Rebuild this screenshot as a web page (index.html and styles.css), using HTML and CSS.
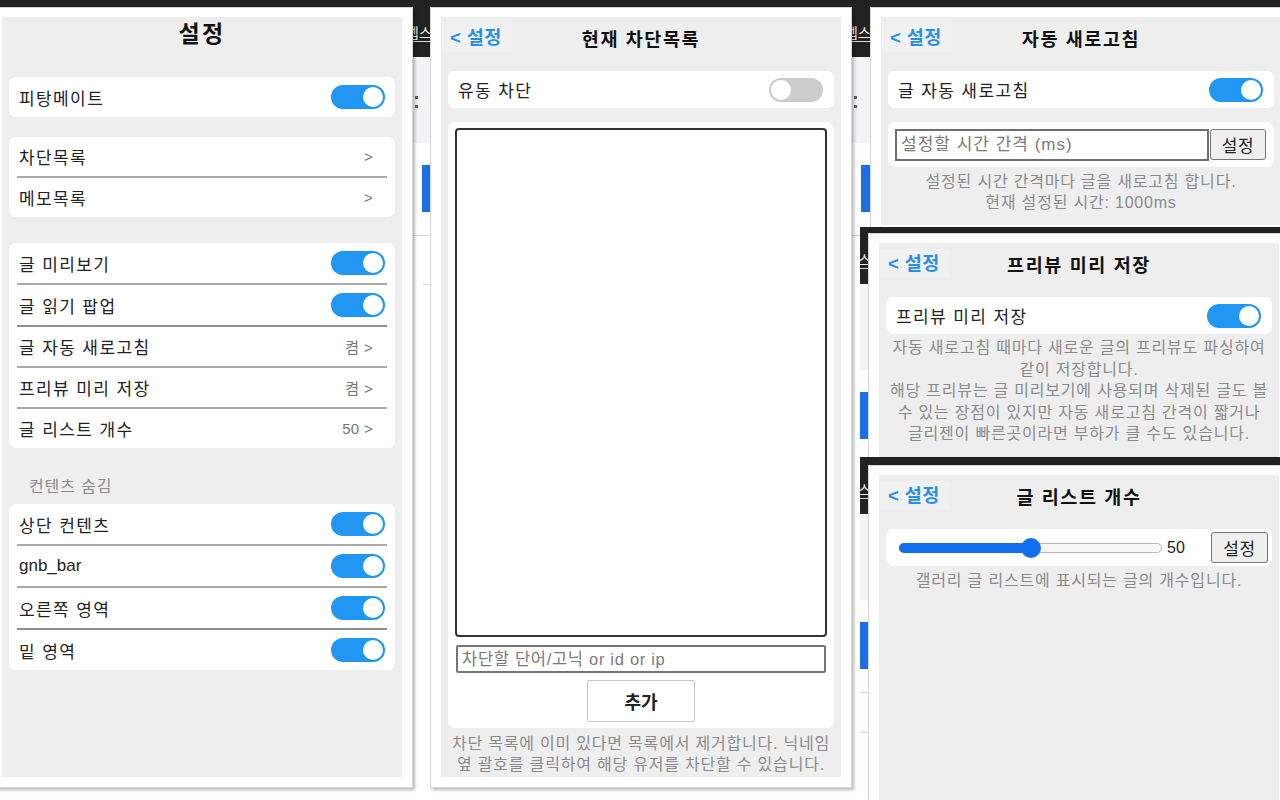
FILE: index.html
```html
<!DOCTYPE html>
<html lang="ko">
<head>
<meta charset="utf-8">
<title>설정</title>
<link rel="stylesheet" href="styles.css">
</head>
<body>
<div class="canvas">

  <!-- shot 1 : main settings -->
  <div class="shot shot1">
    <div class="frame">
      <div class="app app-tall">
        <h1 class="main-title">설정</h1>
        <div class="card">
          <div class="row"><span>피탕메이트</span><span class="tg on"></span></div>
        </div>
        <div class="card card-gap">
          <div class="row link"><span>차단목록</span><span class="val">&gt;</span></div>
          <div class="sep"></div>
          <div class="row link"><span>메모목록</span><span class="val">&gt;</span></div>
        </div>
        <div class="card">
          <div class="row"><span>글 미리보기</span><span class="tg on"></span></div>
          <div class="sep"></div>
          <div class="row"><span>글 읽기 팝업</span><span class="tg on"></span></div>
          <div class="sep sep-dark"></div>
          <div class="row link"><span>글 자동 새로고침</span><span class="val">켬 &gt;</span></div>
          <div class="sep"></div>
          <div class="row link"><span>프리뷰 미리 저장</span><span class="val">켬 &gt;</span></div>
          <div class="sep"></div>
          <div class="row link"><span>글 리스트 개수</span><span class="val">50 &gt;</span></div>
        </div>
        <div class="group-label">컨텐츠 숨김</div>
        <div class="card">
          <div class="row"><span>상단 컨텐츠</span><span class="tg on"></span></div>
          <div class="sep"></div>
          <div class="row"><span class="latin">gnb_bar</span><span class="tg on"></span></div>
          <div class="sep"></div>
          <div class="row"><span>오른쪽 영역</span><span class="tg on"></span></div>
          <div class="sep sep-dark"></div>
          <div class="row"><span>밑 영역</span><span class="tg on"></span></div>
        </div>
      </div>
    </div>
    <div class="sliver sliver-right">
      <div class="s-head"><span class="s-text">렙스</span></div>
      <div class="s-band"><div class="dot"></div><div class="dot"></div></div>
      <div class="s-body"><div class="s-btn"></div><div class="s-line"></div><div class="s-line2"></div></div>
    </div>
  </div>

  <!-- shot 2 : block list -->
  <div class="shot shot2">
    <div class="frame">
      <div class="app app-tall">
        <div class="head"><span class="back">&lt; 설정</span><span class="head-title">현재 차단목록</span><span></span></div>
        <div class="card sub-card">
          <div class="row row-sub"><span>유동 차단</span><span class="tg"></span></div>
        </div>
        <div class="card block-card">
          <textarea class="block-list"></textarea>
          <input class="block-input" type="text" placeholder="차단할 단어/고닉 or id or ip">
          <button class="add-btn" type="button">추가</button>
        </div>
        <p class="desc desc-block">차단 목록에 이미 있다면 목록에서 제거합니다. 닉네임<br>옆 괄호를 클릭하여 해당 유저를 차단할 수 있습니다.</p>
      </div>
    </div>
    <div class="sliver sliver-right">
      <div class="s-head"><span class="s-text">렙스</span></div>
      <div class="s-band"><div class="dot"></div><div class="dot"></div></div>
      <div class="s-body"><div class="s-btn"></div><div class="s-line"></div><div class="s-line2"></div></div>
    </div>
  </div>

  <!-- shot 3 : auto refresh -->
  <div class="shot shot3">
    <div class="frame">
      <div class="app app-r3">
        <div class="head"><span class="back">&lt; 설정</span><span class="head-title">자동 새로고침</span><span></span></div>
        <div class="card sub-card">
          <div class="row row-sub"><span>글 자동 새로고침</span><span class="tg on"></span></div>
        </div>
        <div class="card input-card">
          <input class="ms-input" type="text" placeholder="설정할 시간 간격 (ms)">
          <button class="set-btn" type="button">설정</button>
        </div>
        <p class="desc">설정된 시간 간격마다 글을 새로고침 합니다.<br>현재 설정된 시간: 1000ms</p>
      </div>
    </div>
  </div>

  <!-- shot 4 : preview save -->
  <div class="shot shot4">
    <div class="sliver sliver-left">
      <div class="s-head"><span class="s-text s-text-left">스</span></div>
      <div class="s-band"></div>
      <div class="s-body"><div class="s-btn"></div><div class="s-line"></div></div>
    </div>
    <div class="frame">
      <div class="app app-r4">
        <div class="head"><span class="back">&lt; 설정</span><span class="head-title">프리뷰 미리 저장</span><span></span></div>
        <div class="card sub-card">
          <div class="row row-sub"><span>프리뷰 미리 저장</span><span class="tg on"></span></div>
        </div>
        <p class="desc desc-long">자동 새로고침 때마다 새로운 글의 프리뷰도 파싱하여<br>같이 저장합니다.<br>해당 프리뷰는 글 미리보기에 사용되며 삭제된 글도 볼<br>수 있는 장점이 있지만 자동 새로고침 간격이 짧거나<br>글리젠이 빠른곳이라면 부하가 클 수도 있습니다.</p>
      </div>
    </div>
  </div>

  <!-- shot 5 : list count -->
  <div class="shot shot5">
    <div class="sliver sliver-left">
      <div class="s-head"><span class="s-text s-text-left">스</span></div>
      <div class="s-band"></div>
      <div class="s-body"><div class="s-btn"></div><div class="s-line"></div><div class="s-line3"></div></div>
    </div>
    <div class="frame">
      <div class="app app-r5">
        <div class="head"><span class="back">&lt; 설정</span><span class="head-title">글 리스트 개수</span><span></span></div>
        <div class="card slider-card">
          <div class="range"><div class="range-fill" style="width:50%"></div><span class="range-knob" style="left:50%"></span></div>
          <span class="range-val">50</span>
          <button class="set-btn set-btn-slim" type="button">설정</button>
        </div>
        <p class="desc">갤러리 글 리스트에 표시되는 글의 개수입니다.</p>
      </div>
    </div>
  </div>

</div>
</body>
</html>
```

FILE: styles.css
```css
* { box-sizing: border-box; }

html, body {
  margin: 0;
  padding: 0;
}

body {
  width: 1280px;
  height: 800px;
  overflow: hidden;
  background: #ffffff;
  font-family: "Liberation Sans", "Noto Sans CJK KR", sans-serif;
  color: #222222;
}

.canvas {
  position: relative;
  width: 1280px;
  height: 800px;
  overflow: hidden;
  background: #ffffff;
}

/* ---------- screenshots placed on the collage ---------- */
.shot {
  position: absolute;
  display: flex;
  align-items: flex-start;
  overflow: hidden;
  background: linear-gradient(#222222 0, #222222 8px, #ffffff 8px);
}

.shot1 { left: 0; top: 0; width: 430px; height: 800px; }
.shot2 { left: 430px; top: 0; width: 440px; height: 800px; }
.shot3 { left: 870px; top: 0; width: 410px; height: 227px; }
.shot4 { left: 860px; top: 227px; width: 420px; height: 230px; }
.shot5 { left: 860px; top: 457px; width: 420px; height: 343px; }

.frame {
  position: relative;
  z-index: 1;
  flex: none;
  margin-top: 7px;
  padding: 9px 10px 10px;
  background: #ffffff;
  border: 1px solid #d6d6d6;
  box-shadow: 2px 2px 3px rgba(0, 0, 0, 0.28);
}

.shot1 .frame { margin-left: -9px; }
.shot4 .frame { margin-top: 6px; }
.shot5 .frame { margin-top: 8px; }

/* background page slivers */
.sliver {
  align-self: stretch;
  display: flex;
  flex-direction: column;
  overflow: hidden;
}

.sliver-right { flex: 1; }
.sliver-left { flex: none; width: 8px; }

.s-head {
  flex: none;
  height: 57px;
  background: #222222;
  padding-top: 25px;
  white-space: nowrap;
}

.s-text {
  display: block;
  width: 40px;
  margin-left: -7px;
  color: #f4f0e0;
  font-size: 14px;
  line-height: 16px;
  border-bottom: 1px solid #d8d8d8;
}

.s-text-left { margin-left: -2px; }

.s-band {
  flex: none;
  height: 86px;
  background: #f3f4f6;
  padding: 39px 0 0 2px;
}

.dot {
  width: 3px;
  height: 3px;
  margin-bottom: 6px;
  background: #5a6070;
}

.s-body {
  flex: 1;
  background: #ffffff;
  padding-top: 22px;
}

.s-btn {
  height: 47px;
  margin-left: 9px;
  background: #1a6fe6;
}

.sliver-left .s-btn { margin-left: 0; }

.s-line {
  height: 1px;
  margin-top: 23px;
  background: #d4d4d4;
}

.s-line2 {
  height: 1px;
  margin: 48px 0 0 9px;
  background: #d8d8d8;
}

.s-line3 {
  height: 1px;
  margin-top: 39px;
  background: #dddddd;
}

/* ---------- popup app ---------- */
.app {
  width: 400px;
  background: #eeeeee;
  padding: 0 7px;
  overflow: hidden;
}

.app-tall { height: 760px; }
.app-r3 { height: 208px; }
.app-r4 { height: 240px; }
.app-r5 { height: 360px; }

.main-title {
  margin: 0 0 26px;
  text-align: center;
  font-size: 23px;
  line-height: 34px;
  font-weight: 700;
  letter-spacing: 2.4px;
  color: #111111;
}

.card {
  background: #ffffff;
  border-radius: 7px;
  margin-bottom: 20px;
}

.card-gap { margin-bottom: 26px; }
.sub-card { margin-bottom: 0; }

.row {
  display: flex;
  align-items: center;
  justify-content: space-between;
  height: 40px;
  padding: 0 10px;
  font-size: 17px;
  letter-spacing: 1.4px;
  color: #222222;
}

.row .latin { letter-spacing: 0; }

.row.link { height: 39px; }

.row-sub {
  height: 37px;
  padding: 0 11px 0 10px;
}

.val {
  font-size: 15px;
  letter-spacing: 0.3px;
  color: #777777;
  padding-right: 12px;
}

.sep {
  height: 2px;
  margin: 0 8px;
  background: #a9a9a9;
}

.sep-dark { background: #8f8f8f; }

.group-label {
  margin: 27px 0 5px;
  padding-left: 20px;
  font-size: 16px;
  line-height: 24px;
  letter-spacing: 0.9px;
  color: #8a8a8a;
}

/* toggle switch */
.tg {
  position: relative;
  flex: none;
  width: 54px;
  height: 24px;
  border-radius: 12px;
  background: #cccccc;
}

.tg::after {
  content: "";
  position: absolute;
  top: 2px;
  left: 2px;
  width: 20px;
  height: 20px;
  border-radius: 50%;
  background: #ffffff;
}

.tg.on { background: #2196f3; }
.tg.on::after { left: 32px; }

/* sub page header */
.head {
  display: grid;
  grid-template-columns: 1fr auto 1fr;
  align-items: center;
  height: 29px;
  margin: 6px -6px 19px;
}

.back {
  justify-self: start;
  width: 70px;
  height: 29px;
  padding-left: 8px;
  background: #f1f1f1;
  color: #2590eb;
  font-size: 18.5px;
  font-weight: 700;
  line-height: 29px;
  letter-spacing: 0.4px;
  white-space: nowrap;
}

.head-title {
  font-size: 18.5px;
  font-weight: 700;
  letter-spacing: 1.6px;
  color: #111111;
  white-space: nowrap;
}

/* block list page */
.block-card {
  display: flex;
  flex-direction: column;
  margin: 14px 0 0;
  padding: 6px 7px;
}

.block-list {
  display: block;
  width: 100%;
  height: 509px;
  margin: 0;
  border: 2px solid #333333;
  border-radius: 4px;
  resize: none;
  background: #ffffff;
}

.block-input {
  display: block;
  height: 28px;
  margin: 8px 1px 0;
  padding: 0 4px;
  border: 2px solid #767676;
  border-radius: 2px;
  font-family: inherit;
  font-size: 16.5px;
  letter-spacing: 0.7px;
  color: #222222;
}

.block-input::placeholder,
.ms-input::placeholder { color: #7a7a7a; }

.add-btn {
  display: block;
  width: 108px;
  height: 42px;
  margin: 7px auto 0;
  background: #ffffff;
  border: 1px solid #c6c6c6;
  border-radius: 2px;
  font-family: inherit;
  font-size: 18px;
  font-weight: 700;
  color: #222222;
}

.desc {
  margin: 4px 0 0;
  text-align: center;
  font-size: 16px;
  line-height: 21px;
  letter-spacing: 0.8px;
  color: #8a8a8a;
  white-space: nowrap;
}

.desc-block { margin-top: 5px; }
.desc-long { margin-top: 3px; line-height: 21.5px; }

/* auto refresh page */
.input-card {
  display: flex;
  align-items: center;
  height: 45px;
  margin: 14px 0 0;
  padding: 0 8px 0 7px;
}

.ms-input {
  flex: 1;
  min-width: 0;
  height: 32px;
  padding: 0 4px;
  border: 2px solid #6f6f6f;
  border-radius: 0;
  font-family: inherit;
  font-size: 17px;
  letter-spacing: 1px;
  color: #222222;
}

.set-btn {
  flex: none;
  width: 56px;
  height: 31px;
  margin-left: 1px;
  padding: 0;
  background: #efefef;
  border: 1px solid #767676;
  border-radius: 3px;
  font-family: inherit;
  font-size: 17px;
  letter-spacing: 0.5px;
  color: #222222;
}

/* list count page */
.slider-card {
  display: flex;
  align-items: center;
  height: 37px;
  margin-bottom: 0;
  padding: 0 4px 0 13px;
}

.range {
  position: relative;
  flex: none;
  width: 263px;
  height: 10px;
  border: 1px solid #b8b8b8;
  border-radius: 5px;
  background: #f7f7f7;
}

.range-fill {
  height: 10px;
  margin: -1px 0 0 -1px;
  border-radius: 5px 0 0 5px;
  background: #1170f0;
}

.range-knob {
  position: absolute;
  top: 50%;
  width: 20px;
  height: 20px;
  border-radius: 50%;
  background: #1170f0;
  transform: translate(-50%, -50%);
}

.range-val {
  margin-left: 5px;
  font-size: 16px;
  color: #222222;
}

.set-btn-slim {
  width: 57px;
  margin-left: auto;
}
```
